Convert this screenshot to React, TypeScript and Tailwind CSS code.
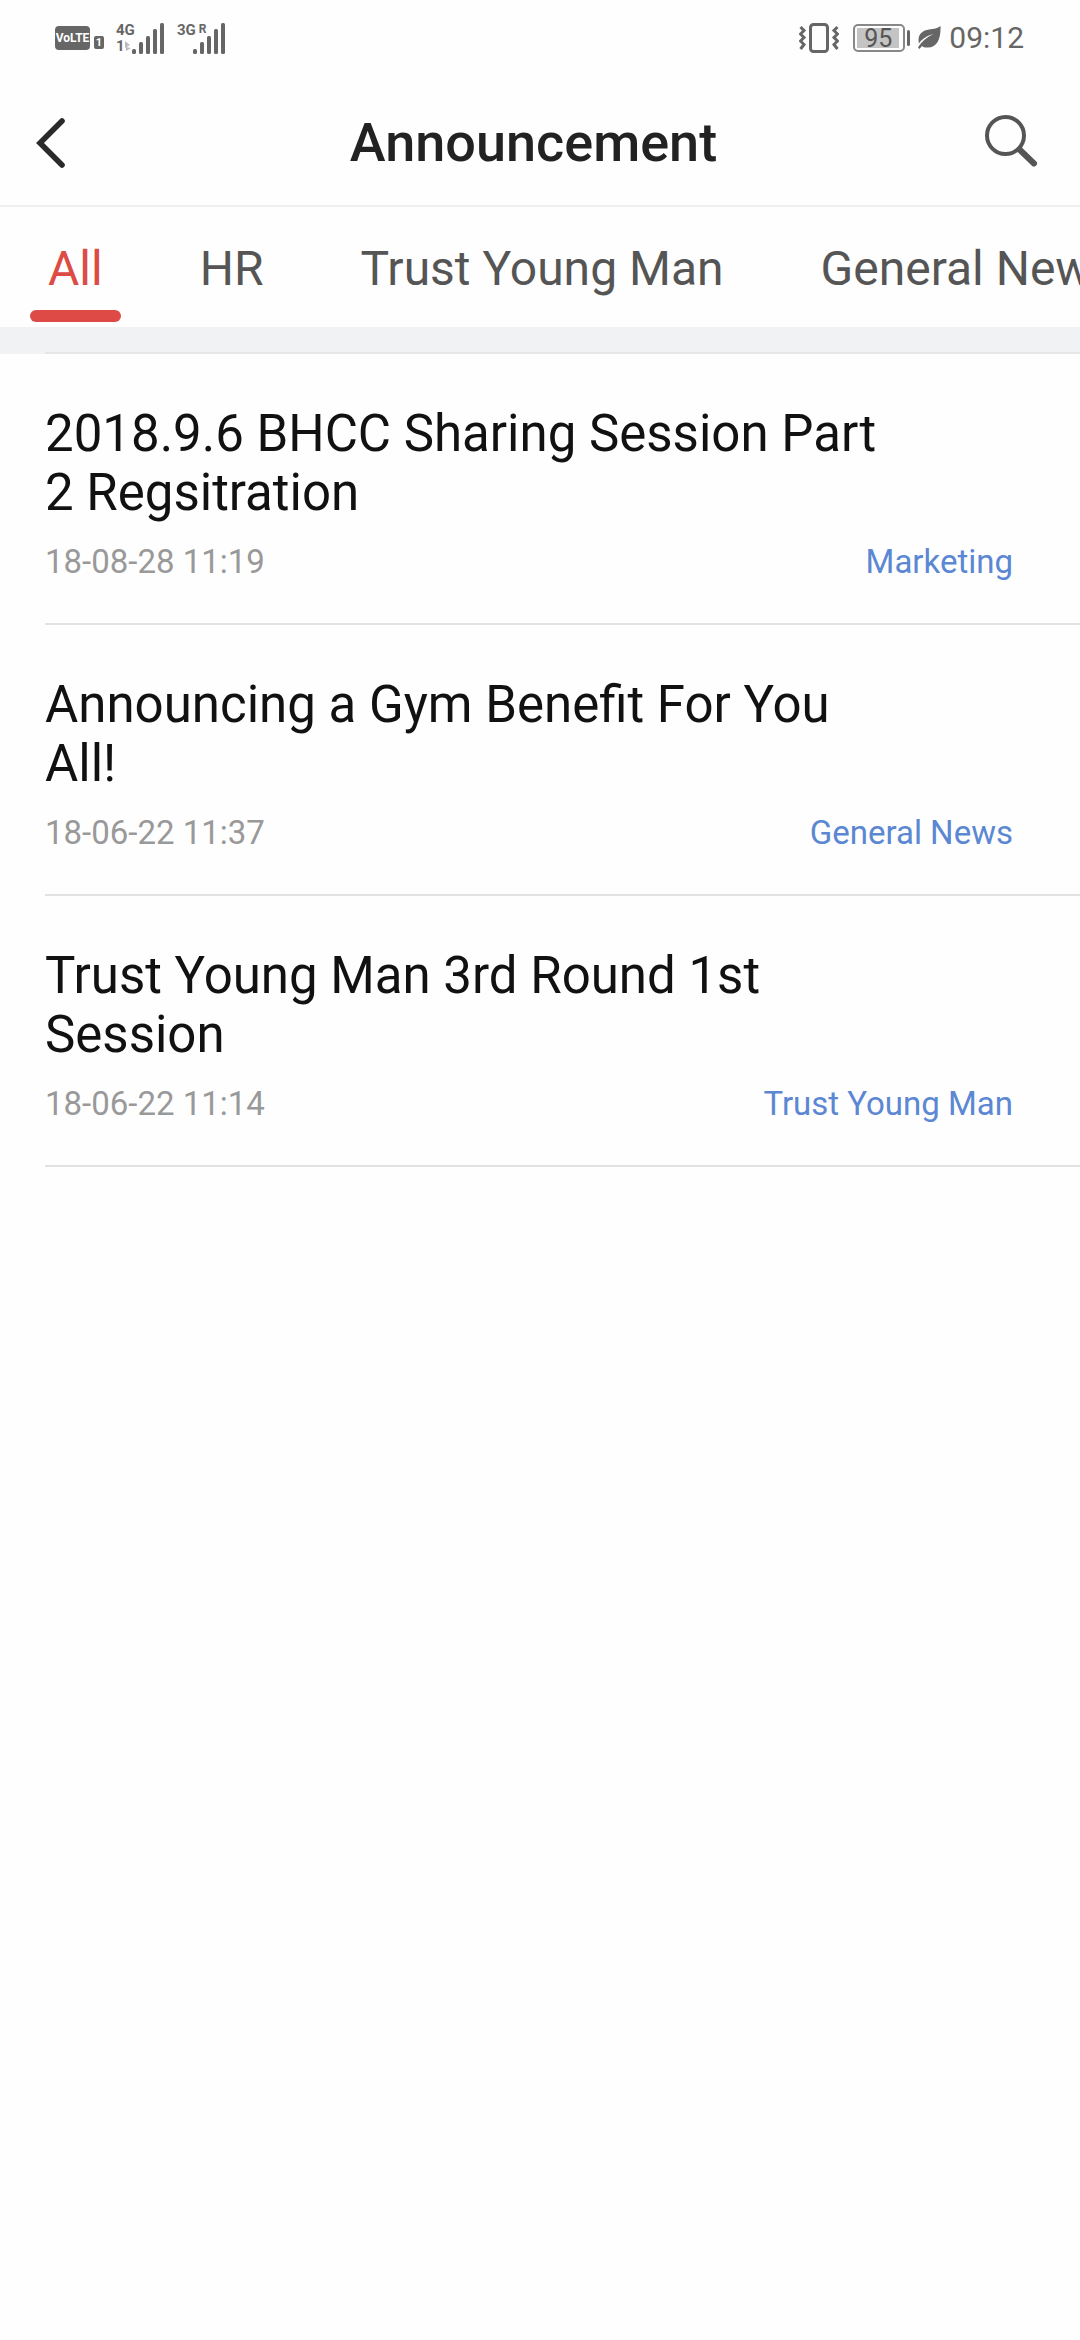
import { useState } from "react";

interface Announcement {
  id: number;
  title: string;
  date: string;
  category: string;
}

const TABS = ["All", "HR", "Trust Young Man", "General News"];

const ANNOUNCEMENTS: Announcement[] = [
  {
    id: 1,
    title: "2018.9.6 BHCC Sharing Session Part 2 Regsitration",
    date: "18-08-28 11:19",
    category: "Marketing",
  },
  {
    id: 2,
    title: "Announcing a Gym Benefit For You All!",
    date: "18-06-22 11:37",
    category: "General News",
  },
  {
    id: 3,
    title: "Trust Young Man 3rd Round 1st Session",
    date: "18-06-22 11:14",
    category: "Trust Young Man",
  },
];

export default function App() {
  const [activeTab, setActiveTab] = useState("All");

  const items =
    activeTab === "All" ? ANNOUNCEMENTS : ANNOUNCEMENTS.filter((a) => a.category === activeTab);

  return (
    <div className="min-h-screen overflow-x-hidden bg-[#fefefe] font-[Roboto,sans-serif]">
      <StatusBar />

      <header className="flex h-[127px] items-center border-b-2 border-[#f0f0f0]">
        <button aria-label="Back" className="flex w-[88px] shrink-0 pl-9">
          <svg width="30" height="52" viewBox="0 0 30 52" fill="none" stroke="#2a2a2a" strokeWidth="5.6" strokeLinecap="round">
            <path d="M26 4 L4 26 L26 48" />
          </svg>
        </button>
        <h1 className="flex-1 text-center text-[54px] leading-[64px] font-medium text-[#222]">
          Announcement
        </h1>
        <button aria-label="Search" className="flex w-[101px] shrink-0 justify-end pr-[42px] pb-1">
          <svg width="54" height="54" viewBox="0 0 54 54" fill="none" stroke="#555" strokeLinecap="round">
            <circle cx="21.5" cy="21.5" r="18.5" strokeWidth="4" />
            <path d="M35.500 35.500 L50 49.500" strokeWidth="6" />
          </svg>
        </button>
      </header>

      <nav className="flex h-[120px] gap-[61px] overflow-x-auto overflow-y-hidden pl-[30px] [scrollbar-width:none]">
        {TABS.map((tab) => (
          <Tab key={tab} label={tab} active={tab === activeTab} onSelect={() => setActiveTab(tab)} />
        ))}
      </nav>

      <div className="h-[27px] bg-[#f0f2f4] pl-[45px]">
        <div className="h-full border-b-2 border-[#e6e6e6]" />
      </div>

      <ul className="pl-[45px]">
        {items.map((item) => (
          <AnnouncementRow key={item.id} item={item} />
        ))}
      </ul>
    </div>
  );
}

function Tab({ label, active, onSelect }: { label: string; active: boolean; onSelect: () => void }) {
  return (
    <button
      onClick={onSelect}
      aria-pressed={active}
      className="flex shrink-0 flex-col items-stretch pt-[34px] whitespace-nowrap"
    >
      <span
        className={
          active
            ? "px-[18px] text-[48px] leading-[56px] text-[#dd4b45]"
            : "px-[18px] text-[48px] leading-[56px] text-[#555]"
        }
      >
        {label}
      </span>
      {active && <span className="mt-[13px] h-3 rounded-full bg-[#de4a45]" />}
    </button>
  );
}

function AnnouncementRow({ item }: { item: Announcement }) {
  return (
    <li className="border-b-2 border-[#e2e2e2] pt-[50px] pb-[41px]">
      <h2 className="pr-[195px] text-[51px] leading-[59px] text-[#111]">{item.title}</h2>
      <div className="mt-5 flex items-center justify-between pr-[67px] text-[33px] leading-10">
        <time className="text-[#999]">{item.date}</time>
        <span className="text-[#5b87d3]">{item.category}</span>
      </div>
    </li>
  );
}

function StatusBar() {
  return (
    <div className="flex h-20 items-center justify-between pr-14 pb-1 pl-[55px] text-[#666]">
      <div className="flex items-center">
        <span className="flex h-6 w-[35px] items-center justify-center rounded-[4px] bg-[#666] text-[12px] leading-none font-bold text-white">
          VoLTE
        </span>
        <span className="mt-2 ml-1 flex h-[13px] w-[10px] items-center justify-center rounded-[2px] bg-[#666] text-[11px] leading-none font-bold text-white">
          1
        </span>
        <div className="ml-3 flex h-8 items-end">
          <div className="flex h-8 w-4 flex-col justify-between text-[15px] leading-4 font-bold">
            <span>4G</span>
            <span className="flex items-center">
              1
              <svg width="6" height="10" viewBox="0 0 6 10" fill="#bbb">
                <path d="M0 0 L5 4 L0 7 Z M1 6 L6 7 L1 10 Z" />
              </svg>
            </span>
          </div>
          <SignalBars />
        </div>
        <div className="ml-3 flex h-8 items-end">
          <div className="flex h-8 w-4 items-start gap-[3px] text-[15px] leading-4 font-bold">
            <span>3G</span>
            <span className="text-[12px] leading-[14px]">R</span>
          </div>
          <SignalBars />
        </div>
      </div>

      <div className="flex items-center">
        <VibrateIcon />
        <div className="ml-[14px] flex h-7 w-[52px] items-center rounded-[5px] border-2 border-[#888] p-[2px]">
          <span className="flex h-full w-[42px] items-center justify-center bg-[#c4c4c4] text-[25px] leading-none text-[#555]">
            95
          </span>
        </div>
        <span className="ml-[2px] h-4 w-[3px] rounded-full bg-[#666]" />
        <svg className="ml-2" width="23" height="24" viewBox="0 0 23 24">
          <path
            d="M22.500 0 C23 12 19.500 22 9 21.500 C7 21.500 5 21 4 20 L1.500 23 L0 21.500 C4 15 9 11 15.500 8 C9 9.500 4 13 1 17.500 C-1 9 4 4.500 11 3.500 C16 3 19.500 2.500 22.500 0 Z"
            fill="#666"
          />
        </svg>
        <span className="ml-2 text-[30px] leading-9">09:12</span>
      </div>
    </div>
  );
}

function SignalBars() {
  return (
    <svg width="33" height="31" viewBox="0 0 33 31" fill="#666">
      <rect x="0" y="26" width="4" height="5" rx="1.500" />
      <rect x="7" y="19" width="4" height="12" rx="1.500" />
      <rect x="14" y="13" width="4" height="18" rx="1.500" />
      <rect x="21" y="6" width="4" height="25" rx="1.500" />
      <rect x="28" y="0" width="4" height="31" rx="1.500" />
    </svg>
  );
}

function VibrateIcon() {
  return (
    <svg width="40" height="30" viewBox="0 0 40 30" fill="none" stroke="#666" strokeWidth="3">
      <rect x="11.500" y="1.500" width="17" height="27" rx="3" />
      <path d="M1.500 4 L5 7.500 L1.500 11 L5 14.500 L1.500 18 L5 21.500 L1.500 26" />
      <path d="M38.500 4 L35 7.500 L38.500 11 L35 14.500 L38.500 18 L35 21.500 L38.500 26" />
    </svg>
  );
}
